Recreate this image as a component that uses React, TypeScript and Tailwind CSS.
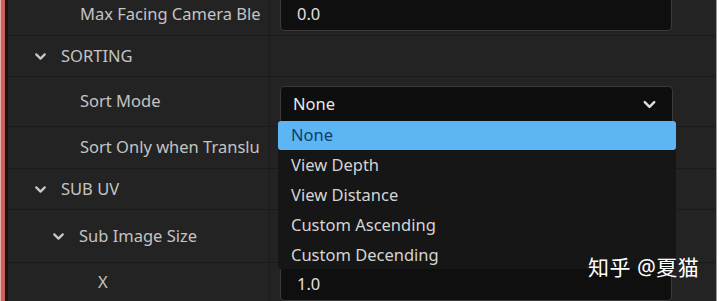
import { ChevronDown } from "lucide-react";

const font = { fontFamily: '"Noto Sans", "Noto Sans CJK SC", sans-serif' };

function Row({
  h,
  label,
  indent,
  chevron,
  children,
}: {
  h: string;
  label: string;
  indent: string;
  chevron?: boolean;
  children?: React.ReactNode;
}) {
  return (
    <div className={`flex ${h} border-b border-[#1a1a1a]`}>
      <div className={`w-[262px] shrink-0 flex items-center border-r border-[#1c1c1c] ${indent}`}>
        {chevron && (
          <ChevronDown size={17} strokeWidth={3.2} className="shrink-0 text-[#c8c8c8] mr-[12px]" />
        )}
        <span className="whitespace-nowrap">{label}</span>
      </div>
      <div className="flex-1 flex items-center pl-[10px]">{children}</div>
    </div>
  );
}

function Box({ value }: { value: string }) {
  return (
    <div className="w-[392px] h-[34px] rounded-[4px] border border-[#3a3a3a] bg-[#0f0f0f] flex items-center pl-[16px] text-[#e0e0e0]">
      {value}
    </div>
  );
}

const options = ["View Depth", "View Distance", "Custom Ascending", "Custom Decending"];

export default function App() {
  return (
    <div
      className="relative w-[720px] h-[301px] overflow-hidden flex bg-[#232323] text-[16.5px] text-[#c4c4c4]"
      style={font}
    >
      <div className="w-px bg-[#e8b0ac]" />
      <div className="w-[4px] bg-[#c8605c]" />
      <div className="w-[3px] bg-[#1a1313]" />

      <div className="flex-1 flex flex-col">
        {/* Max facing camera (label is cut by the column) */}
        <div className="flex h-[36px] border-b border-[#1a1a1a]">
          <div className="w-[262px] shrink-0 pt-[2px] pl-[72px] border-r border-[#1c1c1c] whitespace-nowrap">
            Max Facing Camera Ble
          </div>
          <div className="flex-1 pl-[10px]">
            <div className="w-[392px] h-[34px] -mt-[3px] rounded-[4px] border border-[#3a3a3a] bg-[#0f0f0f] flex items-center pl-[16px] text-[#e0e0e0]">
              0.0
            </div>
          </div>
        </div>

        <Row h="h-[42px]" label="SORTING" indent="pl-[24px]" chevron />

        <Row h="h-[50px]" label="Sort Mode" indent="pl-[72px]">
          <div className="w-[393px] h-[35px] rounded-t-[5px] border border-[#3a3a3a] border-b-0 bg-[#0e0e0e] flex items-center justify-between pl-[12px] pr-[13px] mt-[9px] self-start text-[#e8e8e8]">
            <span>None</span>
            <ChevronDown size={19} strokeWidth={3} className="text-[#e0e0e0]" />
          </div>
        </Row>

        <Row h="h-[42px]" label="Sort Only when Translu" indent="pl-[72px]" />

        <Row h="h-[42px]" label="SUB UV" indent="pl-[24px]" chevron />

        <Row h="h-[53px]" label="Sub Image Size" indent="pl-[42px]" chevron />

        <div className="flex flex-1">
          <div className="w-[262px] shrink-0 pt-[7px] pl-[90px] border-r border-[#1c1c1c]">X</div>
          <div className="flex-1 pl-[10px] pt-[4px]">
            <Box value="1.0" />
          </div>
        </div>
      </div>

      <div className="w-px bg-[#9a9a9a]" />
      <div className="w-[3px] bg-white" />

      {/* dropdown menu */}
      <div className="absolute left-[278px] top-[121px] w-[398px] h-[148px] bg-[#161616] rounded-b-[4px] text-[#d4d4d4]">
        <div className="h-[29px] bg-[#5cb6f4] text-[#113c68] rounded-[3px] flex items-center pl-[13px]">
          None
        </div>
        {options.map((o) => (
          <div key={o} className="h-[30px] flex items-center pl-[13px]">
            {o}
          </div>
        ))}
      </div>

      {/* watermark */}
      <div className="absolute left-[588px] top-[252px] text-white text-[21px] tracking-[0.5px] whitespace-nowrap">
        知乎 @夏猫
      </div>
    </div>
  );
}
